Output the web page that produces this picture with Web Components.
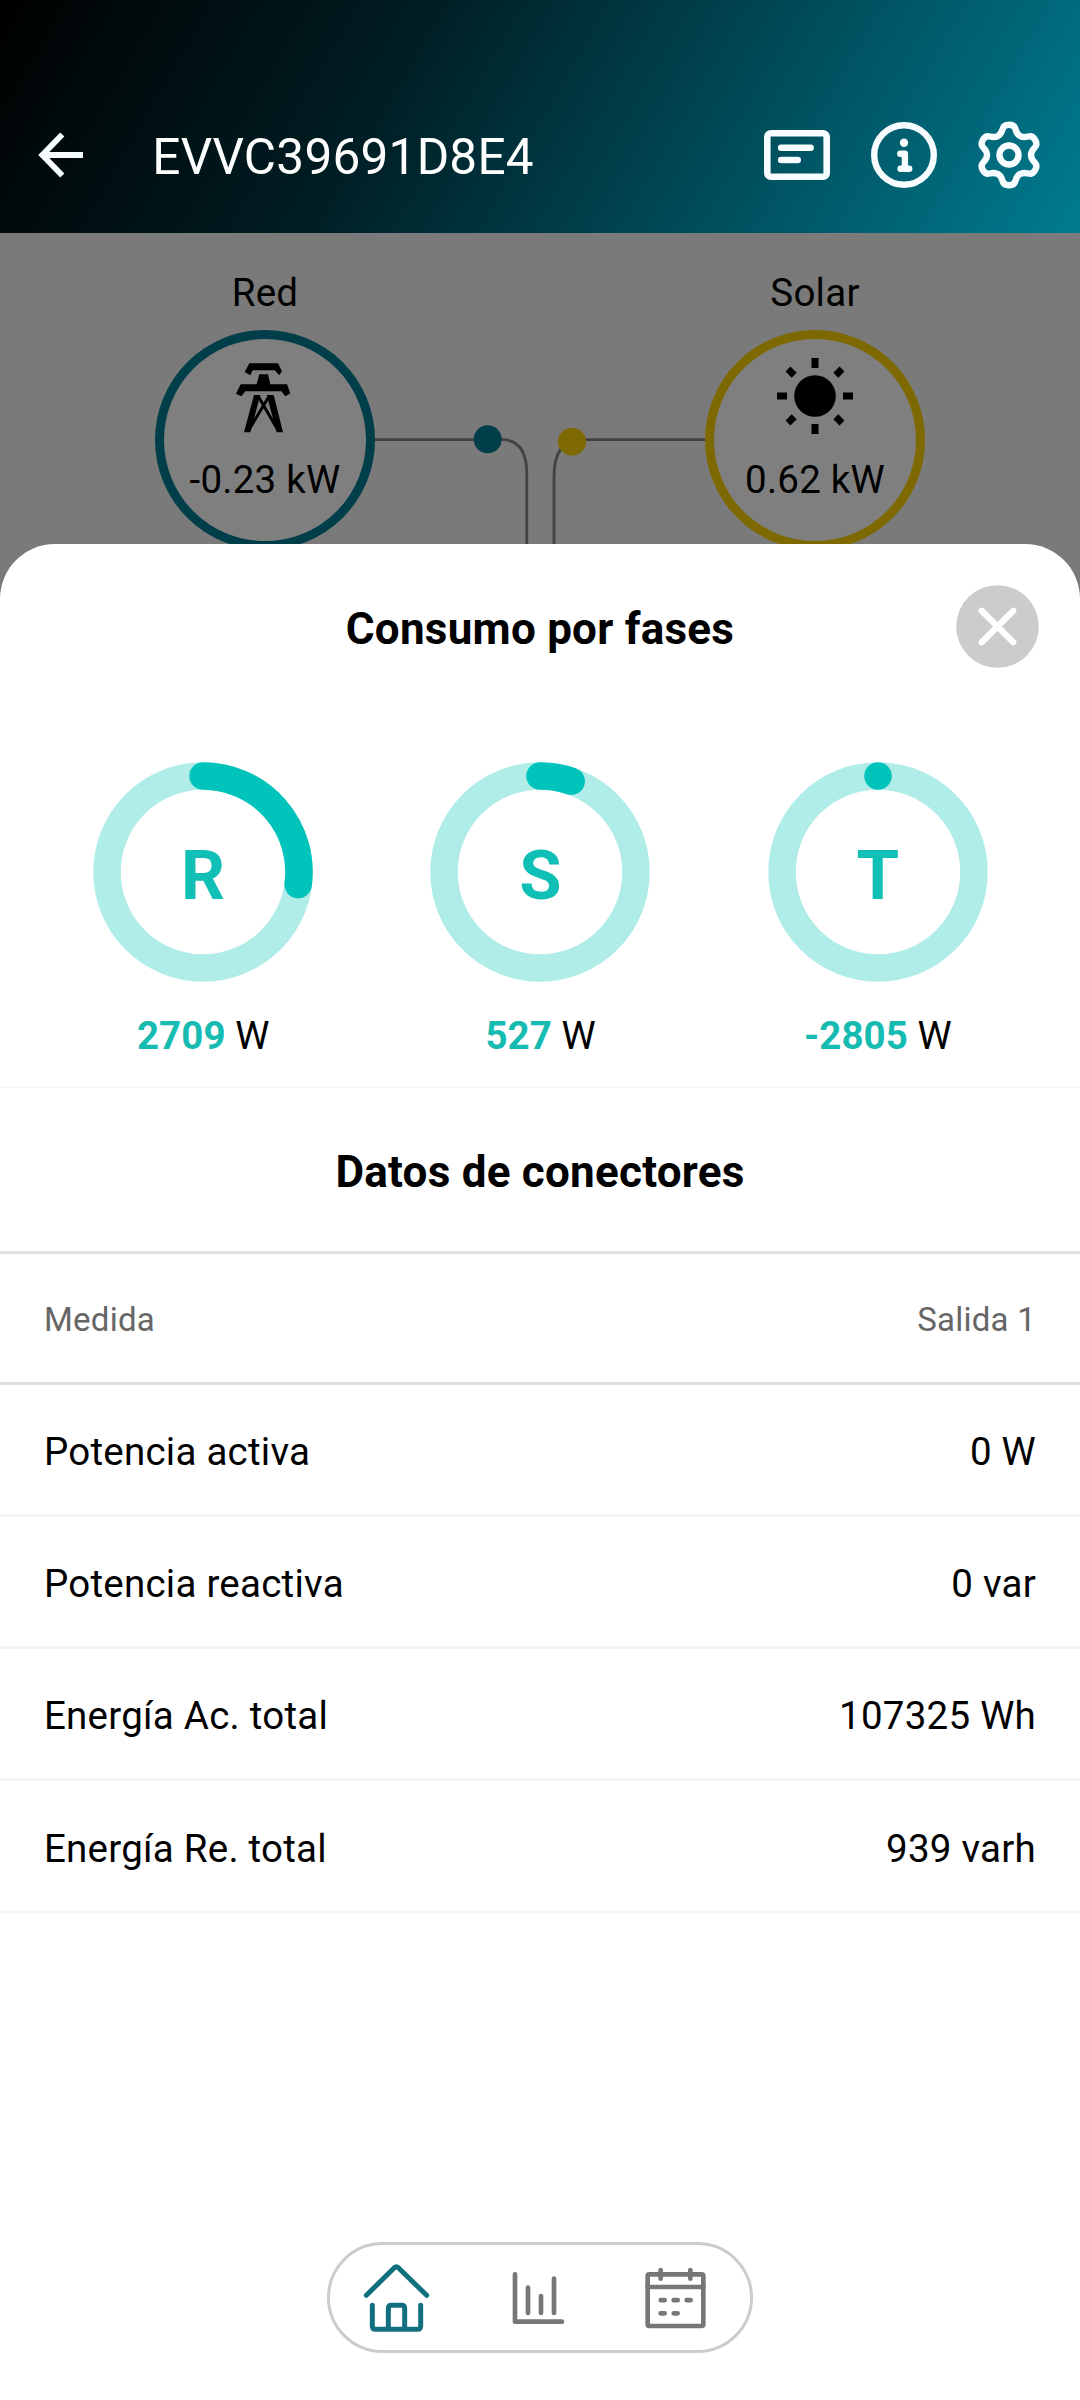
<!DOCTYPE html>
<html lang="es">
<head>
<meta charset="utf-8">
<title>Consumo por fases</title>
<style>
  html, body { margin: 0; background: #fff; }
  body { font-family: Roboto, sans-serif; color: #000; letter-spacing: 0.24px; }
</style>
</head>
<body>
<app-screen></app-screen>

<script>
const define = (name, html, setup) => {
  const tpl = document.createElement('template');
  tpl.innerHTML = html;
  customElements.define(name, class extends HTMLElement {
    constructor() {
      super();
      this.attachShadow({ mode: 'open' }).appendChild(tpl.content.cloneNode(true));
    }
    connectedCallback() { if (setup) setup(this, this.shadowRoot); }
  });
};

/* One sixth of the gear outline, rotated around the centre */
const gearPath = () => {
  const seg = [[-8.4,-20.6],[-7.2,-23],[-6.5,-25.8],[-5.7,-29.2],[-3.6,-30.2],[0,-30.2],
               [3.6,-30.2],[5.7,-29.2],[6.5,-25.8],[7.2,-23],[8.4,-20.6],[11,-19.05]];
  const rot = ([x, y], a) => (x * Math.cos(a) - y * Math.sin(a)).toFixed(2) + ' ' + (x * Math.sin(a) + y * Math.cos(a)).toFixed(2);
  let d = 'M-11 -19.05';
  for (let k = 0; k < 6; k++) {
    const p = seg.map(pt => rot(pt, k * Math.PI / 3));
    for (let i = 0; i < 12; i += 3) d += ` C${p[i]} ${p[i + 1]} ${p[i + 2]}`;
  }
  return d + 'Z';
};

define('app-header', `
<style>
  :host { display: flex; align-items: center; box-sizing: border-box; height: 233px; padding: 76px 40px 0 38px; color: #fff;
    background: linear-gradient(120deg, #000 0%, #001e24 36%, #007b90 100%); }
  h1 { flex: 1; margin: 0; padding: 5px 0 0 66.3px; font-size: 49.5px; font-weight: 400; line-height: 60px; }
  svg { display: block; fill: none; stroke: #f7fdff; stroke-linecap: round; }
  .actions { display: flex; align-items: center; gap: 41px; }
</style>
<svg width="48" height="50" viewBox="38 130 48 50" stroke-width="5.8" style="stroke-linecap:butt"><path d="M83 155H43M62.3 134.5 42.3 155l20 20.5"/></svg>
<h1><slot></slot></h1>
<div class="actions">
  <svg width="66" height="66" viewBox="764 124.3 66 66" stroke-width="6.6"><rect x="767.3" y="135.6" width="59.4" height="43.4" rx="3.5"/><path d="M781.2 150h29.4M781.2 162.3h16.5"/></svg>
  <svg width="66" height="66" viewBox="871 121.3 66 66" stroke-width="6.4"><circle cx="904" cy="154.3" r="29.8"/><circle cx="904" cy="142" r="4.2" fill="#f7fdff" stroke="none"/><path stroke-width="6.4" stroke-linejoin="round" d="M900.3 153h4.6v14.8M900.6 168h8.6"/></svg>
  <svg class="gear" width="62" height="68" viewBox="-31 -34 62 68" stroke-width="6.4" style="overflow:visible"><path stroke-linejoin="round"/><circle r="9.5"/></svg>
</div>`, (el, root) => root.querySelector('.gear path').setAttribute('d', gearPath()));

define('energy-node', `
<style>
  :host { display: flex; flex-direction: column; align-items: center; width: 220px; font-size: 38.5px; line-height: 46px; }
  .disc { display: flex; flex-direction: column; align-items: center; box-sizing: border-box; width: 220px; height: 220px; margin-top: 14px;
    padding-top: 19px; border: 9px solid var(--ring); border-radius: 50%; background: #fff; white-space: nowrap; }
  .disc b { font-weight: 400; margin-top: 22.5px; }
  ::slotted(svg) { display: block; }
</style>
<span class="name"></span>
<div class="disc"><slot></slot><b></b></div>`, (el, root) => {
  root.querySelector('.name').textContent = el.getAttribute('name');
  root.querySelector('b').textContent = el.getAttribute('value');
});

define('energy-scene', `
<style>
  :host { display: flex; position: relative; box-sizing: border-box; height: 367px; padding: 37px 155px 0; overflow: hidden; background: #f4f4f4; }
  :host::after { content: ''; position: absolute; inset: 0; background: rgba(0,0,0,.5); }
  .wire { display: block; width: 330px; height: 330px; flex: none; }
</style>
<energy-node name="Red" value="-0.23 kW" style="--ring:#007c92">
  <svg width="76" height="76" viewBox="291 323 228 228">
    <path d="M358 339H444L456 363 448 375 434 360H368L361 375 344 365ZM388 372H414L421 402H471L481 429 466 438 454 423H346L334 438 318 430 332 402H380Z"/>
    <path d="M372 434H391L361 546H342ZM410 434H431L459 546H440Z"/>
    <path d="M386 440 444 540M416 440 356 540" fill="none" stroke="#000" stroke-width="9"/>
  </svg>
</energy-node>
<svg class="wire" viewBox="375 270 330 330" fill="none">
  <g stroke="#858585" stroke-width="2.75"><path d="M375 439.6H502Q526.8 440 526.8 474V600M705 439.6H582Q554 440 554 476V600"/></g>
  <circle cx="487.7" cy="439.3" r="14" fill="#007c92"/><circle cx="572" cy="441.7" r="14" fill="#fdd300"/>
</svg>
<energy-node name="Solar" value="0.62 kW" style="--ring:#fdd300">
  <svg width="76" height="76" viewBox="-38 -38 76 76"><circle r="20.8"/>
    <path stroke="#000" stroke-width="7" d="M0-38v10M0 28v10M-38 0h10M28 0h10"/>
    <path stroke="#000" stroke-width="7" d="M20.8-20.8l6.2-6.2M-20.8-20.8l-6.2-6.2M20.8 20.8l6.2 6.2M-20.8 20.8l-6.2 6.2"/></svg>
</energy-node>`);

define('phase-ring', `
<style>
  :host { display: flex; flex-direction: column; align-items: center; }
  .dial { display: grid; place-items: center; }
  .dial > * { grid-area: 1 / 1; }
  svg { display: block; fill: none; stroke-width: 27.5; stroke-linecap: round; }
  .letter { padding-top: 7.5px; font-size: 68.75px; line-height: 80px; font-weight: 700; color: #10bfb5; }
  p { margin: 31px 0 0; font-size: 38.5px; line-height: 46px; letter-spacing: 0.05px; }
  b { color: #16bbb1; }
</style>
<div class="dial">
  <svg width="220" height="220" viewBox="-110 -110 220 220"><circle r="96" stroke="#b0ede9"/><path stroke="#00c4bc"/></svg>
  <span class="letter"></span>
</div>
<p><b></b> W</p>`, (el, root) => {
  const a = (+el.getAttribute('share')) * 2 * Math.PI;
  root.querySelector('path').setAttribute('d', a
    ? `M0 -96A96 96 0 0 1 ${(96 * Math.sin(a)).toFixed(2)} ${(-96 * Math.cos(a)).toFixed(2)}` : 'M0 -96h0.01');
  root.querySelector('.letter').textContent = el.getAttribute('phase');
  root.querySelector('b').textContent = el.getAttribute('watts');
});

define('data-row', `
<style>
  :host { display: flex; justify-content: space-between; align-items: center; box-sizing: border-box; height: 132px; padding: 5px 44px 0;
    font-size: 38.5px; line-height: 46px; border-bottom: 3px solid #f3f3f3; }
  :host([head]) { height: 131px; padding-top: 3px; font-size: 33px; color: #666; border-bottom-color: #e0e0e0; }
  :host(:last-of-type) { border-bottom-width: 2px; border-bottom-color: #f5f5f5; }
</style>
<span><slot></slot></span><span><slot name="value"></slot></span>`);

define('bottom-sheet', `
<style>
  :host { display: flex; flex-direction: column; position: relative; box-sizing: border-box; height: 1856px; margin-top: -56px; padding-bottom: 47px;
    background: #fff; border-radius: 55px 55px 0 0; }
  .bar { display: grid; grid-template-columns: 1fr auto 1fr; align-items: center; padding: 41px 41px 0; height: 83px; }
  h2 { margin: 0; font-size: 44px; line-height: 52px; font-weight: 700; text-align: center; }
  .bar h2 { grid-column: 2; padding-top: 5px; }
  .bar svg { display: block; justify-self: end; }
  .phases { display: grid; grid-template-columns: repeat(3, 1fr); box-sizing: border-box; height: 420px; padding: 94px 33.5px 0 34.5px; border-bottom: 1px solid #f5f5f5; }
  .section { height: 163px; display: flex; align-items: center; justify-content: center; border-bottom: 3px solid #e0e0e0; }
  .section h2 { padding-top: 5px; }
  .foot { margin-top: auto; display: flex; justify-content: center; }
</style>
<div class="bar">
  <h2>Consumo por fases</h2>
  <svg width="83" height="83" viewBox="-41.5 -41.5 83 83"><circle r="41.3" fill="#ccc"/><path d="M-15.8-15.8 15.8 15.8M15.8-15.8-15.8 15.8" stroke="#fff" stroke-width="6.2" stroke-linecap="round"/></svg>
</div>
<div class="phases">
  <phase-ring phase="R" watts="2709" share="0.2709"></phase-ring>
  <phase-ring phase="S" watts="527" share="0.0527"></phase-ring>
  <phase-ring phase="T" watts="-2805" share="0"></phase-ring>
</div>
<div class="section"><h2>Datos de conectores</h2></div>
<data-row head>Medida<span slot="value">Salida 1</span></data-row>
<data-row>Potencia activa<span slot="value">0 W</span></data-row>
<data-row>Potencia reactiva<span slot="value">0 var</span></data-row>
<data-row>Energía Ac. total<span slot="value">107325 Wh</span></data-row>
<data-row>Energía Re. total<span slot="value">939 varh</span></data-row>
<div class="foot"><nav-pill></nav-pill></div>`);

define('nav-pill', `
<style>
  :host { display: flex; box-sizing: border-box; width: 426px; height: 111px; border: 3px solid #ccc; border-radius: 56px; background: #fff; }
  svg { display: block; flex: 1 1 0; min-width: 0; height: 100%; fill: none; stroke: #777; stroke-width: 14; stroke-linecap: round; stroke-linejoin: round; }
  .on { stroke: #10707f; stroke-width: 15; }
</style>
<svg class="on" viewBox="60 75 420 315"><path d="M169 226 253 143q6-5 12 0L350 226M187 256V317q0 11 10 11H322q10 0 10-11V256M235 328V266q0-10 9-10H275q9 0 9 10V328"/></svg>
<svg viewBox="480 75 420 315"><path d="M615 163V305H756M654 203V279M693 228V279M732 176V279"/></svg>
<svg viewBox="900 75 420 315"><rect x="1013" y="163" width="167" height="155" rx="5"/><path d="M1013 201H1180M1052 150V176M1141 150V176M1052 240.5h12M1091 240.5h12M1130 240.5h12M1052 280h12M1091 280h12"/></svg>`);

define('app-screen', `
<style>:host { display: block; width: 1080px; height: 2400px; overflow: hidden; }</style>
<app-header>EVVC39691D8E4</app-header>
<energy-scene></energy-scene>
<bottom-sheet></bottom-sheet>`);
</script>
</body>
</html>
